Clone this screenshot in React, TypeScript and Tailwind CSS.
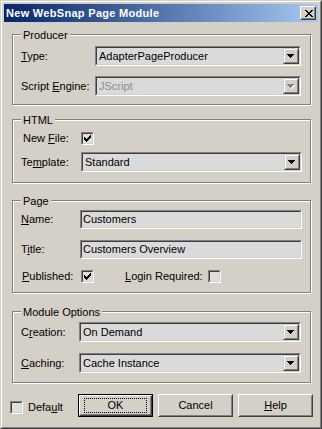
import React from "react";

function Sunken({ className = "", children }: { className?: string; children?: React.ReactNode }) {
  return (
    <div className={`border border-t-[#808080] border-l-[#808080] border-r-white border-b-white ${className}`}>
      <div className="flex h-full w-full items-center border border-t-[#404040] border-l-[#404040] border-r-[#d4d0c8] border-b-[#d4d0c8] bg-[#dadada]">
        {children}
      </div>
    </div>
  );
}

function Arrow({ disabled }: { disabled?: boolean }) {
  const rows = [
    { x: 0, w: 7 },
    { x: 1, w: 5 },
    { x: 2, w: 3 },
    { x: 3, w: 1 },
  ];
  return (
    <svg width="8" height="5" viewBox="0 0 8 5" shapeRendering="crispEdges">
      {disabled &&
        rows.map((r, i) => <rect key={"s" + i} x={r.x + 1} y={i + 1} width={r.w} height={1} fill="#fff" />)}
      {rows.map((r, i) => (
        <rect key={i} x={r.x} y={i} width={r.w} height={1} fill={disabled ? "#808080" : "#000"} />
      ))}
    </svg>
  );
}

function Combo({ value, className = "", disabled }: { value: string; className?: string; disabled?: boolean }) {
  return (
    <Sunken className={className}>
      <span className={`flex-1 truncate pl-[2px] ${disabled ? "text-[#8c8c8c]" : "text-black"}`}>{value}</span>
      <div className="h-full w-[16px] border border-t-[#d4d0c8] border-l-[#d4d0c8] border-r-[#404040] border-b-[#404040]">
        <div className="flex h-full w-full items-center justify-center border border-t-white border-l-white border-r-[#808080] border-b-[#808080] bg-[#d4d0c8]">
          <Arrow disabled={disabled} />
        </div>
      </div>
    </Sunken>
  );
}

function Edit({ value, className = "" }: { value: string; className?: string }) {
  return (
    <Sunken className={className}>
      <span className="pl-[1px] text-black">{value}</span>
    </Sunken>
  );
}

function Check({ checked, className = "" }: { checked?: boolean; className?: string }) {
  const cols = [2, 3, 4, 3, 2, 1, 0];
  return (
    <div className={`h-[13px] w-[13px] shrink-0 border border-t-[#808080] border-l-[#808080] border-r-white border-b-white ${className}`}>
      <div className="flex h-full w-full items-center justify-center border border-t-[#404040] border-l-[#404040] border-r-[#d4d0c8] border-b-[#d4d0c8] bg-[#dedede]">
        {checked && (
          <svg width="7" height="7" viewBox="0 0 7 7" shapeRendering="crispEdges">
            {cols.map((y, x) => (
              <rect key={x} x={x} y={y} width={1} height={3} fill="#000" />
            ))}
          </svg>
        )}
      </div>
    </div>
  );
}

function Group({ label, className = "", children }: { label: string; className?: string; children?: React.ReactNode }) {
  return (
    <div
      className={`ml-[8px] flex w-[299px] flex-col border border-[#808080] shadow-[inset_1px_1px_0_#fff,1px_1px_0_#fff] ${className}`}
    >
      <div className="-mt-[6px] ml-[8px] h-[13px] self-start bg-[#d4d0c8] px-[2px] leading-[13px]">{label}</div>
      {children}
    </div>
  );
}

function Btn({ children, isDefault }: { children: React.ReactNode; isDefault?: boolean }) {
  const face = (
    <div className="h-full w-full border border-t-white border-l-white border-r-[#404040] border-b-[#404040]">
      <div className="flex h-full w-full items-center justify-center border border-t-[#d4d0c8] border-l-[#d4d0c8] border-r-[#808080] border-b-[#808080] bg-[#d4d0c8]">
        {isDefault ? (
          <div className="flex h-[15px] w-[63px] items-center justify-center border border-dotted border-black">
            {children}
          </div>
        ) : (
          children
        )}
      </div>
    </div>
  );
  return (
    <div className={`h-[23px] w-[75px] ${isDefault ? "border border-black" : ""}`}>{face}</div>
  );
}

function CloseGlyph() {
  const rows: [number, number][][] = [
    [[0, 2], [6, 2]],
    [[1, 2], [5, 2]],
    [[2, 4]],
    [[3, 2]],
    [[2, 4]],
    [[1, 2], [5, 2]],
    [[0, 2], [6, 2]],
  ];
  return (
    <svg width="8" height="7" viewBox="0 0 8 7" shapeRendering="crispEdges">
      {rows.map((r, y) => r.map(([x, w], i) => <rect key={y + "-" + i} x={x} y={y} width={w} height={1} fill="#000" />))}
    </svg>
  );
}

export default function App() {
  return (
    <div className="h-[429px] w-[322px] border border-t-[#d4d0c8] border-l-[#d4d0c8] border-r-[#404040] border-b-[#404040] font-['Liberation_Sans',Arial,sans-serif] text-[11px] leading-[13px] text-black">
      <div className="h-full w-full border border-t-white border-l-white border-r-[#808080] border-b-[#808080] bg-[#d4d0c8] p-[2px]">
        {/* title bar */}
        <div className="flex h-[18px] items-center bg-linear-to-r from-[#0a246a] to-[#a6caf0] pl-[2px] pr-[2px]">
          <span className="text-[11px] font-bold tracking-[0.3px] text-white">New WebSnap Page Module</span>
          <div className="ml-auto h-[14px] w-[16px] border border-t-white border-l-white border-r-[#404040] border-b-[#404040]">
            <div className="flex h-full w-full items-center justify-center border border-t-[#d4d0c8] border-l-[#d4d0c8] border-r-[#808080] border-b-[#808080] bg-[#d4d0c8] pl-[1px]">
              <CloseGlyph />
            </div>
          </div>
        </div>

        <div className="flex flex-col">
          <Group label="Producer" className="mt-[12px] h-[71px]">
            <div className="mt-[4px] flex items-center pl-[8px]">
              <span className="w-[74px]">
                <u>T</u>ype:
              </span>
              <Combo value="AdapterPageProducer" className="h-[20px] w-[206px]" />
            </div>
            <div className="mt-[10px] flex items-center pl-[8px]">
              <span className="w-[74px]">
                Script <u>E</u>ngine:
              </span>
              <Combo value="JScript" disabled className="h-[20px] w-[206px]" />
            </div>
          </Group>

          <Group label="HTML" className="mt-[14px] h-[64px]">
            <div className="mt-[5px] flex items-center pl-[8px]">
              <span className="w-[60px] pl-[2px]">
                New <u>F</u>ile:
              </span>
              <Check checked />
            </div>
            <div className="mt-[7px] flex items-center pl-[8px]">
              <span className="w-[60px]">
                Te<u>m</u>plate:
              </span>
              <Combo value="Standard" className="h-[20px] w-[221px]" />
            </div>
          </Group>

          <Group label="Page" className="mt-[17px] h-[93px]">
            <div className="mt-[2px] flex items-center pl-[8px]">
              <span className="w-[59px]">
                <u>N</u>ame:
              </span>
              <Edit value="Customers" className="h-[19px] w-[222px]" />
            </div>
            <div className="mt-[11px] flex items-center pl-[8px]">
              <span className="w-[59px]">
                T<u>i</u>tle:
              </span>
              <Edit value="Customers Overview" className="h-[19px] w-[222px]" />
            </div>
            <div className="mt-[11px] flex items-center pl-[8px]">
              <span className="w-[60px] pl-[1px]">
                <u>P</u>ublished:
              </span>
              <Check checked />
              <span className="ml-[31px] w-[83px]">
                <u>L</u>ogin Required:
              </span>
              <Check />
            </div>
          </Group>

          <Group label="Module Options" className="mt-[18px] h-[72px]">
            <div className="mt-[3px] flex items-center pl-[8px]">
              <span className="w-[58px]">
                C<u>r</u>eation:
              </span>
              <Combo value="On Demand" className="h-[20px] w-[222px]" />
            </div>
            <div className="mt-[11px] flex items-center pl-[8px]">
              <span className="w-[58px]">
                <u>C</u>aching:
              </span>
              <Combo value="Cache Instance" className="h-[20px] w-[222px]" />
            </div>
          </Group>

          <div className="mt-[11px] flex h-[23px]">
            <div className="flex w-[74px] items-center pl-[6px] pt-[4px]">
              <Check />
              <span className="ml-[5px]">
                Defa<u>u</u>lt
              </span>
            </div>
            <div className="flex gap-[5px]">
              <Btn isDefault>OK</Btn>
              <Btn>Cancel</Btn>
              <Btn>
                <span>
                  <u>H</u>elp
                </span>
              </Btn>
            </div>
          </div>
        </div>
      </div>
    </div>
  );
}
